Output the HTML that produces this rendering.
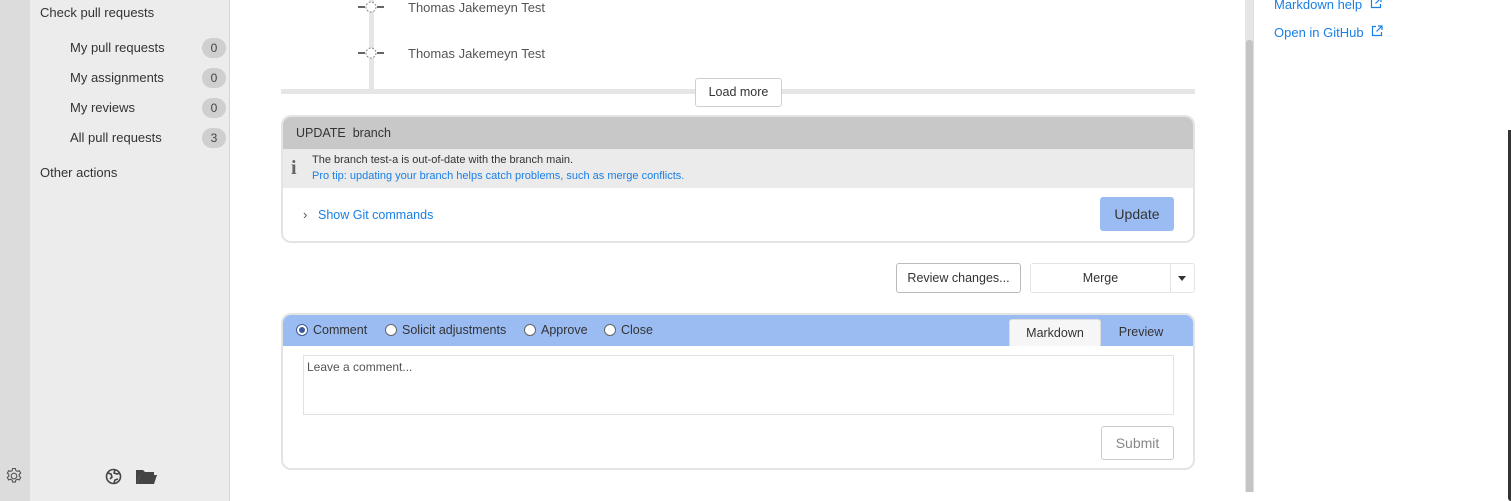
<!DOCTYPE html>
<html><head><meta charset="utf-8"><style>
*{box-sizing:border-box;margin:0;padding:0}
body{width:1511px;height:501px;overflow:hidden;background:#fff;font-family:"Liberation Sans",sans-serif;color:#333;position:relative;font-size:13px}
.abs{position:absolute}
.link{color:#1a7fe6}
.badge{position:absolute;left:202px;width:24px;height:20px;border-radius:10px;background:#cfcfcf;text-align:center;line-height:20px;font-size:12px;color:#444}
.side{left:0;top:0;width:30px;height:501px;background:#dcdcdc}
.nav{left:30px;top:0;width:200px;height:501px;background:#ececec;border-right:1px solid #d6d6d6}
.btn{position:absolute;background:#fff;border:1px solid #cfcfcf;border-radius:3px;text-align:center;font-size:12.5px;color:#333}
.radio{display:inline-block;width:12px;height:12px;border:1px solid #666;border-radius:50%;background:#fff;vertical-align:-2px;margin-right:5px;position:relative}
</style></head><body>
<div class="abs side"></div>
<div class="abs nav"></div>
<div class="abs" style="left:40px;top:5px;font-size:13px">Check pull requests</div>
<div class="abs" style="left:70px;top:40px">My pull requests</div><div class="badge" style="top:38px">0</div>
<div class="abs" style="left:70px;top:70px">My assignments</div><div class="badge" style="top:68px">0</div>
<div class="abs" style="left:70px;top:100px">My reviews</div><div class="badge" style="top:98px">0</div>
<div class="abs" style="left:70px;top:130px">All pull requests</div><div class="badge" style="top:128px">3</div>
<div class="abs" style="left:40px;top:165px">Other actions</div>
<svg class="abs" style="left:5px;top:467px" width="18" height="18" viewBox="0 0 18 18" fill="none" stroke="#555" stroke-width="1.1"><circle cx="9" cy="9" r="2.8"/><path d="M7.6 1.5h2.8l.4 2 1.6.9 1.9-.7 1.4 2.4-1.5 1.3v1.8l1.5 1.3-1.4 2.4-1.9-.7-1.6.9-.4 2H7.6l-.4-2-1.6-.9-1.9.7-1.4-2.4 1.5-1.3V7.4L2.3 6.1l1.4-2.4 1.9.7 1.6-.9z"/></svg>
<svg class="abs" style="left:105px;top:468px" width="17" height="17" viewBox="0 0 17 17" fill="none" stroke="#444" stroke-width="1.6"><circle cx="8.5" cy="8.5" r="7"/><path d="M3 5l3 1 1 3-2 2M10 2l-1 3 3 1 3-1M9 15l1-3 3-1"/></svg>
<svg class="abs" style="left:136px;top:469px" width="21" height="16" viewBox="0 0 21 16"><path d="M0 1h7l2 2h9v3H4L1 15H0z" fill="#444"/><path d="M4 6h17l-3 9H1z" fill="#444"/></svg>

<!-- timeline -->
<div class="abs" style="left:369px;top:0;width:5px;height:90px;background:#e6e6e6"></div>
<div class="abs" style="left:281px;top:89px;width:914px;height:5px;background:#e6e6e6"></div>
<svg class="abs" style="left:358px;top:0" width="26" height="14"><path d="M0 7h7M19 7h7" stroke="#666" stroke-width="2"/><circle cx="13" cy="7" r="5" fill="#fff" stroke="#888" stroke-dasharray="2 1.5"/></svg>
<svg class="abs" style="left:358px;top:46" width="26" height="14" style="top:46px"></svg>
<svg class="abs" style="left:358px;top:46px" width="26" height="14"><path d="M0 7h7M19 7h7" stroke="#666" stroke-width="2"/><circle cx="13" cy="7" r="5" fill="#fff" stroke="#888" stroke-dasharray="2 1.5"/></svg>
<div class="abs" style="left:408px;top:0;color:#555">Thomas Jakemeyn Test</div>
<div class="abs" style="left:408px;top:46px;color:#555">Thomas Jakemeyn Test</div>
<div class="btn" style="left:695px;top:78px;width:87px;height:29px;line-height:27px">Load more</div>

<!-- update box -->
<div class="abs" style="left:281px;top:115px;width:914px;height:128px;border:2px solid #e4e4e4;border-radius:10px;overflow:hidden">
 <div style="height:32px;background:#c8c8c8;padding-left:13px;line-height:32px;font-size:12.5px;color:#333">UPDATE&nbsp; branch</div>
 <div style="height:39px;background:#ebebeb;position:relative">
  <div class="abs" style="left:8px;top:8px;font:bold 20px 'Liberation Serif',serif;color:#666">i</div>
  <div class="abs" style="left:29px;top:5px;font-size:11px;color:#333">The branch test-a is out-of-date with the branch main.</div>
  <div class="abs link" style="left:29px;top:21px;font-size:11px">Pro tip: updating your branch helps catch problems, such as merge conflicts.</div>
 </div>
 <div class="abs" style="left:20px;top:90px;font-size:13px;color:#555">›</div>
 <div class="abs link" style="left:35px;top:91px;font-size:12.5px">Show Git commands</div>
 <div class="abs" style="left:817px;top:80px;width:74px;height:34px;background:#9bbcf3;border-radius:3px;text-align:center;line-height:34px;font-size:14px;color:#333">Update</div>
</div>

<div class="btn" style="left:896px;top:263px;width:125px;height:30px;line-height:28px;border-color:#bbb">Review changes...</div>
<div class="btn" style="left:1030px;top:263px;width:165px;height:30px;line-height:28px;border-color:#e4e4e4"><span style="position:absolute;left:0;width:139px">Merge</span><span style="position:absolute;left:139px;top:0;width:1px;height:28px;background:#e4e4e4"></span><span style="position:absolute;left:147px;top:12px;border:4px solid transparent;border-top:5px solid #333"></span></div>

<!-- comment box -->
<div class="abs" style="left:281px;top:313px;width:914px;height:157px;border:2px solid #e4e4e4;border-radius:10px;overflow:hidden">
 <div style="height:31px;background:#9bbcf3;position:relative;font-size:12.5px;line-height:31px">
  <span class="abs" style="left:13px"><span class="radio" style="border-color:#3a5a9a"><span style="position:absolute;left:2px;top:2px;width:6px;height:6px;border-radius:50%;background:#3a5a9a"></span></span>Comment</span>
  <span class="abs" style="left:102px"><span class="radio"></span>Solicit adjustments</span>
  <span class="abs" style="left:241px"><span class="radio"></span>Approve</span>
  <span class="abs" style="left:321px"><span class="radio"></span>Close</span>
  <div class="abs" style="left:726px;top:4px;width:92px;height:27px;background:#f6f6f6;border:1px solid #ddd;border-bottom:none;border-radius:3px 3px 0 0;text-align:center;line-height:26px">Markdown</div>
  <div class="abs" style="left:818px;top:4px;width:80px;line-height:27px;text-align:center">Preview</div>
 </div>
 <div class="abs" style="left:20px;top:40px;width:871px;height:60px;border:1px solid #e2e2e2;padding:4px 3px;font-size:12px;color:#555">Leave a comment...</div>
 <div class="btn" style="left:818px;top:111px;width:73px;height:34px;line-height:32px;font-size:14px;color:#888;border-color:#ccc">Submit</div>
</div>

<!-- scrollbar -->
<div class="abs" style="left:1245px;top:0;width:8px;height:492px;background:#e6e6e6"></div>
<div class="abs" style="left:1246px;top:40px;width:7px;height:452px;background:#c4c4c4;border-radius:3px 3px 0 0"></div>
<div class="abs" style="left:1253px;top:0;width:1px;height:492px;background:#ddd"></div>

<div class="abs link" style="left:1274px;top:-3px">Markdown help <svg width="12" height="12" viewBox="0 0 12 12" fill="none" stroke="#1a7fe6" stroke-width="1.2" style="margin-left:4px"><path d="M5 1.5H1.5v9h9V7M7 1h4v4M11 1L5.5 6.5"/></svg></div>
<div class="abs link" style="left:1274px;top:25px">Open in GitHub <svg width="12" height="12" viewBox="0 0 12 12" fill="none" stroke="#1a7fe6" stroke-width="1.2" style="margin-left:4px"><path d="M5 1.5H1.5v9h9V7M7 1h4v4M11 1L5.5 6.5"/></svg></div>
<div class="abs" style="left:1508px;top:130px;width:3px;height:371px;background:#333;border-radius:0 0 0 6px"></div>
</body></html>
